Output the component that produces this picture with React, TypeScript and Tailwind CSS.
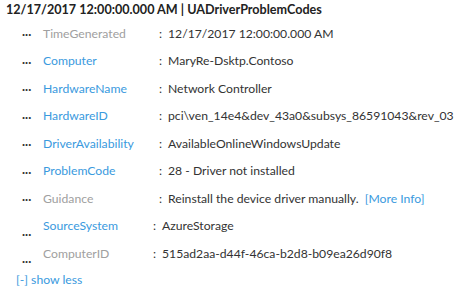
import React from 'react';

type Row = {
  label: string;
  value: React.ReactNode;
  linked: boolean;
  shifted?: boolean;
};

const rows: Row[] = [
  { label: 'TimeGenerated', value: '12/17/2017 12:00:00.000 AM', linked: false },
  { label: 'Computer', value: 'MaryRe-Dsktp.Contoso', linked: true },
  { label: 'HardwareName', value: 'Network Controller', linked: true },
  { label: 'HardwareID', value: 'pci\\ven_14e4&dev_43a0&subsys_86591043&rev_03', linked: true },
  { label: 'DriverAvailability', value: 'AvailableOnlineWindowsUpdate', linked: true },
  { label: 'ProblemCode', value: '28 - Driver not installed', linked: true },
  {
    label: 'Guidance',
    value: (
      <>
        Reinstall the device driver manually. <span className="ml-[3px] text-[#3a9ade]">[More Info]</span>
      </>
    ),
    linked: false,
  },
  { label: 'SourceSystem', value: 'AzureStorage', linked: true, shifted: true },
  { label: 'ComputerID', value: '515ad2aa-d44f-46ca-b2d8-b09ea26d90f8', linked: false, shifted: true },
];

export default function App() {
  return (
    <div
      className="h-[291px] w-[466px] overflow-hidden bg-white text-[12.2px] text-[#333]"
      style={{ fontFamily: '"Segoe UI", Lato, "Open Sans", sans-serif' }}
    >
      <div className="flex h-[20px] items-center pl-[6px] text-[12.6px] font-bold text-[#222]">
        12/17/2017 12:00:00.000 AM | UADriverProblemCodes
      </div>
      <div className="flex flex-col">
        {rows.map(row => (
          <div key={row.label} className="flex h-[27.5px] items-center whitespace-nowrap pl-[22px]">
            <span
              className={`w-[21px] shrink-0 text-[13px] font-bold leading-none text-[#333] ${row.shifted ? 'translate-y-[5px]' : '-translate-y-[2px]'}`}
            >
              ...
            </span>
            <span
              className={`shrink-0 ${row.shifted ? 'w-[110px]' : 'w-[116px]'} ${row.linked ? 'text-[#3a9ade]' : 'text-[#a0a0a0]'}`}
            >
              {row.label}
            </span>
            <span className="w-[9px] shrink-0">:</span>
            <span>{row.value}</span>
          </div>
        ))}
      </div>
      <div className="flex h-[26px] items-center pl-[16px] text-[#3a9ade]">[-] show less</div>
    </div>
  );
}
